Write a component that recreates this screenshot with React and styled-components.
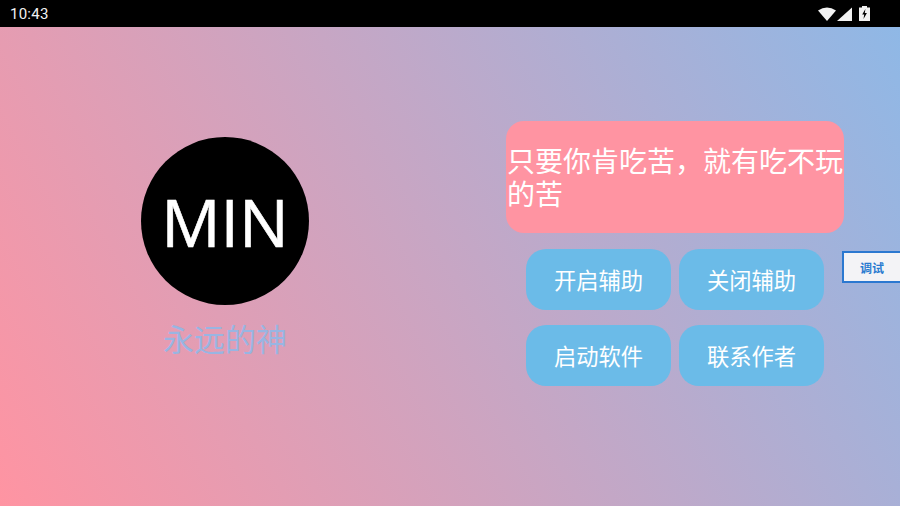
import React from 'react';
import styled, { createGlobalStyle } from 'styled-components';

const Global = createGlobalStyle`
  html, body { margin: 0; padding: 0; width: 900px; height: 506px; overflow: hidden; }
  body { font-family: "Roboto", "Noto Sans CJK SC", sans-serif; }
`;

const Screen = styled.div`
  position: relative;
  width: 900px;
  height: 506px;
  display: flex;
  flex-direction: column;
  overflow: hidden;
`;

const StatusBar = styled.div`
  height: 27px;
  background: #000;
  color: #f2f2f2;
  display: flex;
  align-items: center;
  justify-content: space-between;
  padding: 0 30px 0 10px;
  font-size: 15px;
  letter-spacing: 0.25px;
`;

const StatusIcons = styled.div`
  display: flex;
  align-items: center;
  gap: 1px;
`;

const Main = styled.div`
  flex: 1;
  display: flex;
  background: linear-gradient(61deg, #ff94a2, #8fb8e6);
`;

const Side = styled.div`
  width: 450px;
  display: flex;
  flex-direction: column;
  align-items: center;
`;

const Avatar = styled.div`
  width: 168px;
  height: 168px;
  margin-top: 110px;
  border-radius: 50%;
  background: #000;
  color: #fff;
  font-size: 66px;
  -webkit-text-stroke: 0.6px #fff;
  display: flex;
  align-items: center;
  justify-content: center;
  font-family: "Open Sans", sans-serif;
`;

const Motto = styled.div`
  margin-top: 13px;
  font-size: 31px;
  line-height: 40px;
  color: #98b5e2;
  font-family: "Noto Sans CJK SC", sans-serif;
`;

const Notice = styled.div`
  width: 338px;
  height: 112px;
  box-sizing: border-box;
  margin-top: 94px;
  padding: 0 0 0 1px;
  border-radius: 18px;
  background: #ff94a2;
  color: #fff;
  font-size: 28px;
  line-height: 33px;
  display: flex;
  align-items: center;
  font-family: "Noto Sans CJK SC", sans-serif;
`;

const ButtonGrid = styled.div`
  display: grid;
  grid-template-columns: 145px 145px;
  grid-auto-rows: 61px;
  column-gap: 8px;
  row-gap: 15px;
  margin-top: 16px;
`;

const ActionButton = styled.div`
  border-radius: 20px;
  background: #6bbbe8;
  color: #fff;
  font-size: 22.3px;
  padding-bottom: 2px;
  box-sizing: border-box;
  display: flex;
  align-items: center;
  justify-content: center;
  font-family: "Noto Sans CJK SC", sans-serif;
`;

const DebugTab = styled.div`
  position: absolute;
  left: 842px;
  top: 251px;
  width: 60px;
  height: 32px;
  box-sizing: border-box;
  border: 2px solid #2b78d0;
  background: #f3f3f6;
  color: #2a7bd0;
  font-size: 12px;
  font-weight: 700;
  display: flex;
  align-items: center;
  justify-content: center;
  font-family: "Noto Sans CJK SC", sans-serif;
`;

const actions = ['开启辅助', '关闭辅助', '启动软件', '联系作者'];

export default function App() {
  return (
    <Screen>
      <Global />
      <StatusBar>
        <span>10:43</span>
        <StatusIcons>
          <svg width="18" height="14" viewBox="0 0 18 14">
            <path d="M0 3.6 Q9 -2.6 18 3.6 L9 14 Z" fill="#f2f2f2" />
          </svg>
          <svg width="15" height="14" viewBox="0 0 15 14">
            <path d="M0 14 L15 0.5 L15 14 Z" fill="#f2f2f2" />
          </svg>
          <svg width="11" height="15" viewBox="0 0 11 15" style={{ marginLeft: 6 }}>
            <path d="M3 0 H8 V1.5 H11 V15 H0 V1.5 H3 Z" fill="#f2f2f2" />
            <path d="M6.4 3 L3.2 8.6 H5.2 L4.5 13 L7.9 7 H5.8 Z" fill="#000" />
          </svg>
        </StatusIcons>
      </StatusBar>
      <Main>
        <Side>
          <Avatar>MIN</Avatar>
          <Motto>永远的神</Motto>
        </Side>
        <Side>
          <Notice>
            <span>只要你肯吃苦，就有吃不玩的苦</span>
          </Notice>
          <ButtonGrid>
            {actions.map((label) => (
              <ActionButton key={label}>{label}</ActionButton>
            ))}
          </ButtonGrid>
        </Side>
      </Main>
      <DebugTab>调试</DebugTab>
    </Screen>
  );
}
